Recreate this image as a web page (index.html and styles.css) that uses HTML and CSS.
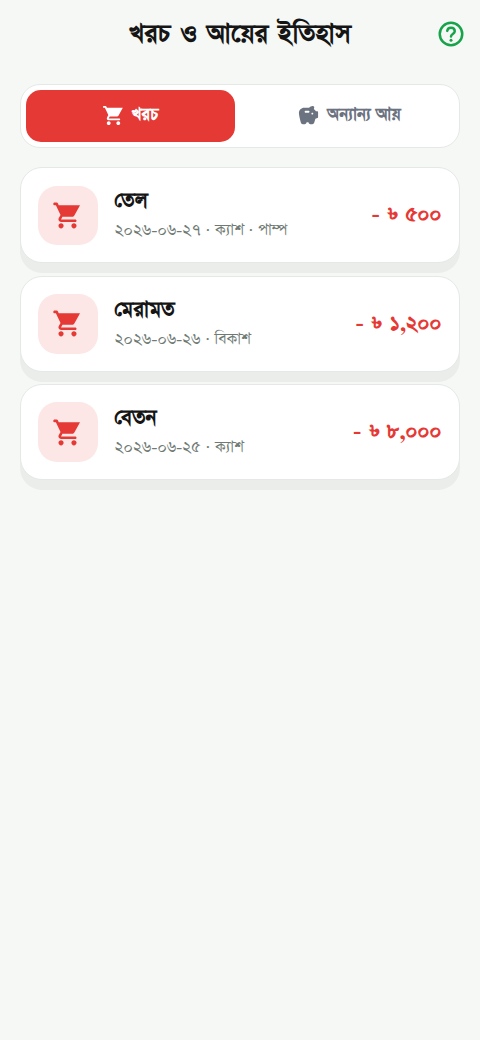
FILE: index.html
```html
<!DOCTYPE html>
<html lang="bn"><head><meta charset="utf-8"><title>খরচ ও আয়ের ইতিহাস</title><link rel="stylesheet" href="styles.css"></head>
<body>
<svg class="defs"><defs>
<symbol id="cart" viewBox="0 0 24 24"><path d="M7 18c-1.100 0-1.990.9-1.990 2S5.900 22 7 22s2-.9 2-2-.9-2-2-2zM1 3c0 .55.45 1 1 1h1l3.600 7.590-1.350 2.440C4.520 15.370 5.480 17 7 17h11c.55 0 1-.45 1-1s-.45-1-1-1H7l1.100-2h7.450c.75 0 1.410-.41 1.750-1.030L21.700 4H5.210l-.67-1.430c-.16-.35-.52-.57-.9-.57H2c-.55 0-1 .45-1 1zm16 15c-1.100 0-1.990.9-1.990 2s.89 2 1.990 2 2-.9 2-2-.9-2-2-2z"/></symbol>
</defs></svg>
<header class="header"><h1 class="title">খরচ ও আয়ের ইতিহাস</h1>
<svg class="help" viewBox="0 0 24 24"><circle class="line" cx="12" cy="12" r="9"/><path class="line" d="M9 9.500C9.200 7.800 10.400 7 12 7c1.800 0 3 1.200 3 2.800 0 2.100-3 2.300-3 4.200"/><circle cx="12" cy="17" r="1.200"/></svg></header>
<main>
<nav class="tabs"><button class="tab active"><svg viewBox="0 0 24 24"><use href="#cart"/></svg><span>খরচ</span></button>
<button class="tab"><svg viewBox="0 0 24 24"><path fill-rule="evenodd" d="M19.830 7.500L17.560 5.230c.07-.42.180-.81.320-1.150A1.500 1.500 0 0 0 16.500 2c-1.640 0-3.090.79-4 2h-5C4.460 4 2 6.460 2 9.500c0 2.250 1.370 7.480 2.080 10.040C4.320 20.400 5.110 21 6.010 21H8c1.100 0 2-.9 2-2h2c0 1.100.9 2 2 2h2.010c.88 0 1.660-.58 1.920-1.430l1.250-4.160 2.140-.72c.41-.13.68-.51.68-.94V8.500c0-.55-.45-1-1-1zM12 9H9c-.55 0-1-.45-1-1s.45-1 1-1h3c.55 0 1 .45 1 1s-.45 1-1 1zm4 2c-.55 0-1-.45-1-1s.45-1 1-1 1 .45 1 1-.45 1-1 1z"/></svg><span>অন্যান্য আয়</span></button></nav>
<section class="list">
<article class="card"><div class="icon"><svg viewBox="0 0 24 24"><use href="#cart"/></svg></div><div class="info"><h2>তেল</h2><p>২০২৬-০৬-২৭ · ক্যাশ · পাম্প</p></div><strong class="amount"><span class="sign">-</span> ৳ ৫০০</strong></article>
<article class="card"><div class="icon"><svg viewBox="0 0 24 24"><use href="#cart"/></svg></div><div class="info"><h2>মেরামত</h2><p>২০২৬-০৬-২৬ · বিকাশ</p></div><strong class="amount"><span class="sign">-</span> ৳ ১,২০০</strong></article>
<article class="card"><div class="icon"><svg viewBox="0 0 24 24"><use href="#cart"/></svg></div><div class="info"><h2>বেতন</h2><p>২০২৬-০৬-২৫ · ক্যাশ</p></div><strong class="amount"><span class="sign">-</span> ৳ ৮,০০০</strong></article>
</section></main></body></html>
```
FILE: styles.css
```css
* { box-sizing: border-box; margin: 0; }
body { background: #f6f8f6; color: #151515; font-family: FreeSerif, FreeSans, sans-serif; min-height: 1040px; }
.defs { display: none; }
svg { fill: currentColor; display: block; }
.header { position: relative; height: 68px; display: flex; align-items: center; justify-content: center; }
.title { font-size: 31px; line-height: 40px; padding-top: 1px; font-weight: 700; white-space: nowrap; word-spacing: 2px; }
.help { position: absolute; right: 14.500px; top: 19px; width: 30px; height: 30px; color: #16a34a; }
.line { fill: none; stroke: currentColor; stroke-width: 2; stroke-linecap: round; }
main { padding: 16px 20px; }
.tabs { display: flex; gap: 10px; height: 63.600px; padding: 5px; border: 1px solid #e5e9e6; border-radius: 20px; background: #fff; }
.tab { flex: 1; display: flex; align-items: center; justify-content: center; gap: 7px; padding: 0 1px 1px 0; border: 0; border-radius: 15px; background: none; font: 700 20px FreeSerif, FreeSans, sans-serif; color: #6b7280; white-space: nowrap; }
.tab svg { width: 23px; height: 23px; }
.tab.active { background: #e53935; color: #fff; }
.list { display: grid; gap: 12.330px; margin-top: 19.900px; }
.card { height: 96px; display: flex; align-items: center; padding: 0 17.500px 0 17px; border: 1px solid #e5e9e6; border-radius: 22px; background: #fff; box-shadow: 0 10px 0 #eaedea; }
.icon { width: 59.500px; height: 59.500px; border-radius: 19px; display: grid; place-items: center; background: #fce7e6; color: #e53935; margin-right: 17px; }
.icon svg { width: 31px; height: 31px; }
.info { flex: 1; padding-top: 2px; white-space: nowrap; }
.info h2 { font-size: 24.500px; line-height: 30px; }
.info p { font-size: 18.900px; line-height: 28px; color: #6f7a74; }
.amount { font-size: 24px; color: #e53935; white-space: nowrap; word-spacing: 2px; }
.sign { font-family: Inter, sans-serif; font-size: 20px; font-weight: 600; }
```
